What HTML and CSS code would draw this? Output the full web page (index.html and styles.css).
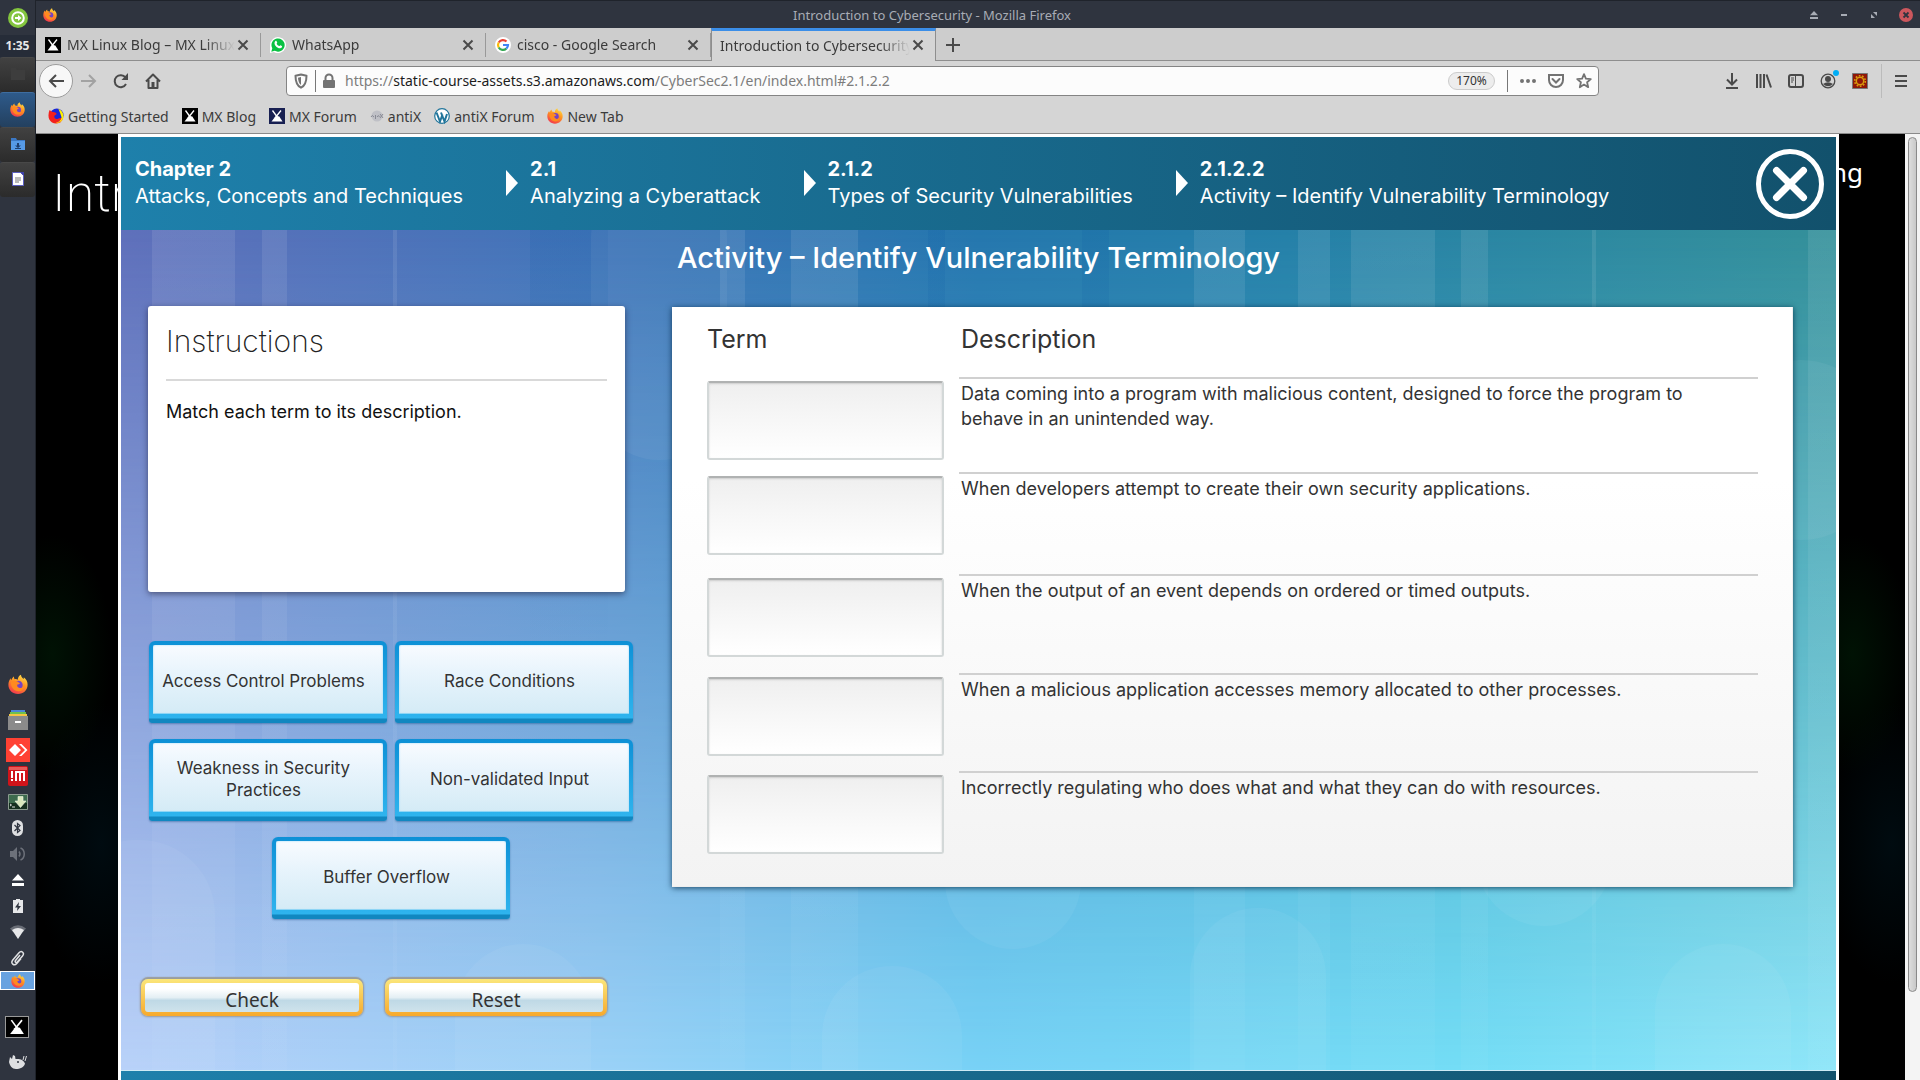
FILE: index.html
```html
<!DOCTYPE html>
<html lang="en">
<head>
<meta charset="utf-8">
<title>Introduction to Cybersecurity</title>
<link rel="stylesheet" href="styles.css">
</head>
<body>
<svg class="defs" aria-hidden="true">
  <defs>
    <linearGradient id="flame" x1="0.8" y1="0" x2="0.3" y2="1">
      <stop offset="0" stop-color="#ffe14a"/><stop offset="0.45" stop-color="#ff9421"/><stop offset="1" stop-color="#f2374f"/>
    </linearGradient>
    <symbol id="firefox" viewBox="0 0 20 20">
      <path fill="url(#flame)" d="M10 19.6C4.600 19.600.4 15.600.4 10.300c0-3 1.100-5.300 2.300-6.600 0 .9.200 1.500.5 2C3.800 4 5 2.500 6 2c-.2 1.200.2 2 .8 2.700 1.200-.3 2.200.1 3 .6C9.800 3 11 1.200 13 .3c0 2 1 2.700 2.600 4.200.3-.5.300-1.100.1-1.700 2.500 1.800 4 4.600 3.900 7.500 0 5.300-4.200 9.300-9.600 9.300z"/>
      <circle cx="10.400" cy="10.500" r="4.300" fill="#7543c4"/>
      <path fill="#ff8a1f" d="M2.800 7.500c2-1.600 4.400-1.800 6.700-.4 1 .6 1.300 1.300 2.500 1.300-.4 1.300-1.900 1.200-2.500 1.700-.8.700-.2 3.300 2.500 3.500 3 .1 4.800-2.400 4-5.100 1.600 4.500-1.400 8.300-5.400 8.300-4.500 0-8-4.300-7.800-9.300z"/>
    </symbol>
    <symbol id="firefox-old" viewBox="0 0 20 20">
      <circle cx="11" cy="9" r="8.500" fill="#1826d8"/>
      <path fill="#fff000" d="M13 1c3 1 6 4.500 6.300 8.500C19.700 15 16 18.500 12 19l5-7-2-6z"/>
      <path fill="#f3201c" d="M2 2.500l3.500 2.600c2.500-.4 4.500.5 5.500 2.400l-3 2.200c-.6 2.800 1.200 4.500 3.900 3.900 2.300-.5 3.500-1.600 4.600-.8.700.6-1.700 3.600-4.500 4.100l4 .7C11 21 4 19.500 1.500 14 0 10.500.5 6 2 2.500z"/>
      <path fill="#ff9a1c" d="M9 19c5 1 9-2 10-6.500-1.500 3-4.500 5-7.500 5z"/>
    </symbol>
    <symbol id="mx" viewBox="0 0 16 16">
      <path fill="#fff" d="M2.500 13.500L6 9l1.700-1 2.600.6L13.500 13.500z"/>
      <path fill="none" stroke="#fff" stroke-width="1.300" d="M3.500 2.500l6.500 9M12 2.500L6 10"/>
    </symbol>
    <symbol id="close" viewBox="0 0 16 16">
      <path fill="none" stroke="currentColor" stroke-width="2" d="M3.500 3.500l9 9M12.500 3.500l-9 9"/>
    </symbol>
    <symbol id="eject" viewBox="0 0 12 12">
      <path fill="currentColor" d="M6 0l6 6.500H0zM0 9h12v3H0z"/>
    </symbol>
  </defs>
</svg>

<div class="desktop">
  <aside class="panel">
    <button class="start" aria-label="Menu">
      <svg width="20" height="20" viewBox="0 0 20 20"><circle cx="10" cy="10" r="10" fill="#83c53e"/><circle cx="10" cy="10" r="5.800" fill="none" stroke="#fff" stroke-width="2"/><path d="M7 9h3V7l3.500 3-3.500 3v-2H7z" fill="#fff"/></svg>
    </button>
    <time class="clock">1:35</time>
    <button class="task" aria-label="Files"><svg width="14" height="14" viewBox="0 0 14 14"><path fill="#3d3d3d" d="M0 1h5l1 2h8v10H0z"/></svg></button>
    <button class="task task-active" aria-label="Firefox"><svg width="15" height="15"><use href="#firefox"/></svg></button>
    <button class="task" aria-label="Downloads"><svg width="14" height="14" viewBox="0 0 14 14"><path fill="#3b78c4" d="M0 1h5l1 2h8v3H0z"/><path fill="#569ae6" d="M0 4h14v9H0z"/><path fill="#1e3f6f" d="M6 6h2v2.500h2L7 11 4 8.500h2zM4 11h6v1H4z"/></svg></button>
    <button class="task" aria-label="Document"><svg width="12" height="14" viewBox="0 0 12 14"><path fill="#fff" stroke="#5b5fc0" d="M.5.5h8l3 3v10H.5z"/><path stroke="#777" d="M3 6h6M3 8h6M3 10h4"/><path fill="#3e42a8" d="M8 0h4v4z"/></svg></button>

    <div class="tray">
      <span class="tray-tall"><svg width="20" height="21"><use href="#firefox"/></svg></span>
      <span class="tray-tall"><svg width="20" height="20" viewBox="0 0 20 20"><path fill="#4a86d8" d="M3 0h14v3H3z"/><path fill="#6fc04c" d="M2 2h16v3H2z"/><path fill="#f4c542" d="M1 4h18v3H1z"/><rect y="6" width="20" height="14" fill="#8b8b8b"/><path fill="#fff" d="M7 11h6v2H7z"/></svg></span>
      <span class="tray-item"><svg width="24" height="24" viewBox="0 0 24 24"><path fill="#ff4133" d="M0 0h24v24H0z"/><path fill="#fff" d="M9 6l6 6-6 6-6-6zM13 6h2.500l6 6-6 6H13l6-6z"/></svg></span>
      <span class="tray-item"><svg width="20" height="20" viewBox="0 0 20 20"><rect width="20" height="20" rx="2" fill="#d0141a"/><path fill="#e85a58" d="M1 1h18v3H1z"/><path fill="#fff" d="M3 5h2v7H3zM3 13h2v2H3zM7 5h10v10h-2V7h-2v8h-2V7H9v8H7z"/></svg></span>
      <span class="tray-item"><svg width="20" height="16" viewBox="0 0 20 16"><path fill="#3d6b4d" stroke="#8a9a8e" d="M.5.500h19v15H.5z"/><path fill="#16301f" d="M1 9h18v6H1z"/><path fill="#d9e8bd" stroke="#f4f8e8" stroke-width=".6" d="M10 2.500h5V7h3l-5.500 6.500L7 7h3z"/><path stroke="#ddd" fill="none" d="M2 10l1.500 1L2 12M4 13h3"/></svg></span>
      <span class="tray-item"><svg width="11" height="16" viewBox="0 0 11 16"><rect width="11" height="16" rx="5.500" fill="#dedfe1"/><path fill="none" stroke="#2f343f" stroke-width="1.200" d="M2.500 5l5.500 5.500-2.500 2V3.500L8 5.500 2.500 11"/></svg></span>
      <span class="tray-item"><svg width="16" height="14" viewBox="0 0 16 14"><path fill="#6d717a" d="M0 4h3l4-4v14l-4-4H0z"/><path fill="none" stroke="#6d717a" stroke-width="1.500" d="M9 4.500q2 2.500 0 5M10.500 1c5 2 5 10 0 12"/></svg></span>
      <span class="tray-item tray-light"><svg width="12" height="12"><use href="#eject"/></svg></span>
      <span class="tray-item"><svg width="10" height="14" viewBox="0 0 10 14"><path fill="#e6e7e9" d="M0 1h3V0h4v1h3v13H0z"/><path fill="#2f343f" d="M6 3L2 8.500h2.500L4 12l4-5H5.500z"/></svg></span>
      <span class="tray-item"><svg width="16" height="14" viewBox="0 0 16 14"><path fill="#696d76" d="M0 3.500q8-6.500 16 0l-3 3.500H3z"/><path fill="#e6e7e9" d="M2 5q6-4 12 0L8 14z"/></svg></span>
      <span class="tray-item"><svg width="16" height="16" viewBox="0 0 16 16"><path fill="none" stroke="#e0e1e3" stroke-width="1.500" d="M10 5l-4.500 5.500c-1 1.300.6 2.700 1.800 1.500L12.500 6c2.500-3-1-6-3.500-3.200L2.800 10C.2 13.300 4 16.500 6.800 13.500L11 8.500"/></svg></span>
      <span class="tray-selected"><svg width="14" height="14"><use href="#firefox"/></svg></span>
      <span class="tray-mx"><svg width="20" height="20"><use href="#mx"/></svg></span>
      <span class="tray-item"><svg width="18" height="14" viewBox="0 0 18 14"><path fill="#dedfe1" d="M0 7l1-5 2 2 1-4 2 1 .5 3c4-.5 8 .5 9.500 4.500-1 4-5 5.500-9 5.500C3 14 1 11 0 7z"/><path fill="none" stroke="#dedfe1" d="M14 5l1-4M16 6l1.500-5"/><circle cx="9" cy="7" r="1" fill="#2f343f"/></svg></span>
    </div>
  </aside>

  <div class="window">
    <div class="titlebar">
      <svg width="14" height="14"><use href="#firefox"/></svg>
      <span class="titlebar-text">Introduction to Cybersecurity - Mozilla Firefox</span>
      <div class="controls">
        <button aria-label="Shade"><svg width="8" height="8"><use href="#eject"/></svg></button>
        <button aria-label="Minimize"><svg width="6" height="2"><path fill="currentColor" d="M0 0h6v2H0z"/></svg></button>
        <button aria-label="Restore"><svg width="6" height="6" viewBox="0 0 6 6"><path fill="currentColor" d="M2 0h4v4zM0 2v4h4z"/></svg></button>
        <button aria-label="Close"><svg width="14" height="14" viewBox="0 0 14 14"><circle cx="7" cy="7" r="7" fill="#cc575d"/><path stroke="#2f343f" stroke-width="1.800" d="M4.500 4.500l5 5M9.500 4.500l-5 5"/></svg></button>
      </div>
    </div>

    <div class="tabs">
      <div class="tab"><svg class="fav fav-mx" width="16" height="16"><use href="#mx"/></svg><span class="tab-text">MX Linux Blog – MX Linux</span><button class="tab-close" aria-label="Close tab"><svg width="16" height="16"><use href="#close"/></svg></button></div>
      <div class="tab"><svg class="fav" width="16" height="16" viewBox="0 0 16 16"><path fill="#fff" d="M0 16V8a8 8 0 1 1 4 7z"/><path fill="#0ac143" d="M1.300 14.700l1-3.400a6.600 6.600 0 1 1 2.500 2.500z"/><path fill="#fff" d="M5.200 4.200c1-.8 1.300-.3 2 1.300.2.600-.7 1-.5 1.400.6 1 1.300 1.700 2.400 2.200.5.200.9-1 1.300-.8 1.900.9 2 1 1.500 2-.9 1.400-2.700 1.200-4.500.1C5.300 9 3.500 6.500 5.200 4.200z"/></svg><span class="tab-text">WhatsApp</span><button class="tab-close" aria-label="Close tab"><svg width="16" height="16"><use href="#close"/></svg></button></div>
      <div class="tab"><svg class="fav" width="16" height="16" viewBox="0 0 16 16"><circle cx="8" cy="8" r="8" fill="#fff"/><g fill="none" stroke-width="2.200"><path stroke="#ea4335" d="M11.500 4.500A5 5 0 0 0 3.700 5.500"/><path stroke="#fbbc05" d="M3.700 5.500a5 5 0 0 0 0 5"/><path stroke="#34a853" d="M3.700 10.500a5 5 0 0 0 7.600 1.200"/><path stroke="#4285f4" d="M11.300 11.700A5 5 0 0 0 13 8H8"/></g></svg><span class="tab-text">cisco - Google Search</span><button class="tab-close" aria-label="Close tab"><svg width="16" height="16"><use href="#close"/></svg></button></div>
      <div class="tab tab-current"><span class="tab-text">Introduction to Cybersecurity</span><button class="tab-close" aria-label="Close tab"><svg width="16" height="16"><use href="#close"/></svg></button></div>
      <button class="tab-new" aria-label="New tab"><svg width="14" height="14" viewBox="0 0 14 14"><path stroke="currentColor" stroke-width="2" d="M7 0v14M0 7h14"/></svg></button>
    </div>

    <div class="nav">
      <div class="nav-buttons">
        <button class="back" aria-label="Back"><svg width="16" height="14" viewBox="0 0 16 14"><path fill="none" stroke="currentColor" stroke-width="2" d="M16 7H2M8 1L2 7l6 6"/></svg></button>
        <button class="faded" aria-label="Forward"><svg width="16" height="14" viewBox="0 0 16 14"><path fill="none" stroke="currentColor" stroke-width="2" d="M0 7h14M8 1l6 6-6 6"/></svg></button>
        <button aria-label="Reload"><svg width="16" height="16" viewBox="0 0 16 16"><path fill="none" stroke="currentColor" stroke-width="2" d="M13 11a6 6 0 1 1-.5-6.500"/><path fill="currentColor" d="M15 0v7H8.500z"/></svg></button>
        <button aria-label="Home"><svg width="16" height="16" viewBox="0 0 16 16"><path fill="none" stroke="currentColor" stroke-width="2" stroke-linejoin="round" d="M1 8.500L8 1.500l7 7M3.500 7v8h9V7"/><path fill="currentColor" d="M6.500 9h3v6h-3z"/></svg></button>
      </div>
      <div class="urlbar">
        <svg width="14" height="16" viewBox="0 0 14 16"><path fill="none" stroke="currentColor" stroke-width="2" stroke-linejoin="round" d="M7 1.500l5.500 1.200c0 6-1.500 10-5.500 12-4-2-5.500-6-5.500-12z"/><path fill="currentColor" d="M7 4v8C5 10.500 4.200 8 4 4.700z"/></svg>
        <span class="url-sep"></span>
        <svg width="12" height="16" viewBox="0 0 12 16"><rect y="7" width="12" height="8" rx="1" fill="currentColor"/><path fill="none" stroke="currentColor" stroke-width="2" d="M2.500 8V5a3.500 3.500 0 0 1 7 0v3"/></svg>
        <span class="url">https://<b>static-course-assets.s3.amazonaws.com</b>/CyberSec2.1/en/index.html#2.1.2.2</span>
        <button class="zoom">170%</button>
        <span class="url-sep"></span>
        <svg width="16" height="4" viewBox="0 0 16 4"><path stroke="currentColor" stroke-width="4" stroke-linecap="round" d="M2 2h0M8 2h0M14 2h0"/></svg>
        <svg width="16" height="14" viewBox="0 0 16 14"><path fill="none" stroke="currentColor" stroke-width="2" d="M1 1h14v5a7 7 0 0 1-14 0z"/><path fill="none" stroke="currentColor" stroke-width="2" stroke-linecap="round" d="M4.500 5L8 8.500 11.500 5"/></svg>
        <svg width="16" height="16" viewBox="0 0 16 16"><path fill="none" stroke="currentColor" stroke-width="1.800" stroke-linejoin="round" d="M8 1.200l1.900 4.500 4.900.4-3.700 3.200 1.100 4.900L8 11.600l-4.200 2.600 1.100-4.900L1.200 6.100l4.900-.4z"/></svg>
      </div>
      <div class="nav-tools">
        <button aria-label="Downloads"><svg width="16" height="16" viewBox="0 0 16 16"><path fill="none" stroke="currentColor" stroke-width="2" d="M8 0v11M3 6.500L8 11.500l5-5M2 15h12"/></svg></button>
        <button aria-label="Library"><svg width="16" height="14" viewBox="0 0 16 14"><path fill="none" stroke="currentColor" stroke-width="2" d="M1 0v14M4.500 0v14M8 0v14M10.500.5L15 13.500"/></svg></button>
        <button aria-label="Sidebars"><svg width="16" height="14" viewBox="0 0 16 14"><rect x="1" y="1" width="14" height="12" rx="2" fill="none" stroke="currentColor" stroke-width="2"/><path stroke="currentColor" d="M7.500 1v12M3 4h3M3 6h3M3 8h2"/></svg></button>
        <button class="account" aria-label="Account"><svg width="16" height="16" viewBox="0 0 16 16"><circle cx="8" cy="8" r="6.800" fill="none" stroke="currentColor" stroke-width="1.300"/><circle cx="8" cy="6" r="3" fill="currentColor"/><path fill="currentColor" d="M3 11q5-3.500 10 0-5 4.500-10 0z"/></svg></button>
        <button aria-label="Extension"><svg width="16" height="16" viewBox="0 0 16 16"><path fill="#8f1608" stroke="#777" d="M.5.5h15v15H.5z"/><circle cx="8" cy="8" r="5.300" fill="none" stroke="#d99a0c" stroke-width="1.600" stroke-dasharray="1.700 1.600"/><circle cx="8" cy="8" r="3.700" fill="none" stroke="#d99a0c" stroke-width="1.500"/></svg></button>
        <span class="tool-sep"></span>
        <button aria-label="Open menu"><svg width="12" height="12" viewBox="0 0 12 12"><path stroke="currentColor" stroke-width="2" d="M0 1h12M0 6h12M0 11h12"/></svg></button>
      </div>
    </div>

    <nav class="bookmarks">
      <a href="#"><svg width="16" height="16"><use href="#firefox-old"/></svg>Getting Started</a>
      <a href="#"><svg class="fav-mx" width="16" height="16"><use href="#mx"/></svg>MX Blog</a>
      <a href="#"><svg class="fav-mx fav-forum" width="16" height="16"><use href="#mx"/></svg>MX Forum</a>
      <a href="#"><svg width="14" height="16" viewBox="0 0 14 16"><circle cx="7" cy="8" r="5.500" fill="#bfc0c6"/><path fill="none" stroke="#888a94" d="M1 9q1-3 3 0M5.500 7v4M7 9q1.500-3 2.500 0M13 6l-3 4M10 6l3 4"/></svg>antiX</a>
      <a href="#"><svg width="16" height="16" viewBox="0 0 16 16"><circle cx="8" cy="8" r="7.300" fill="#fff" stroke="#21759b" stroke-width="1.200"/><path fill="none" stroke="#21759b" stroke-width="2" d="M2.500 4.500L6 13.500l2.500-7M7 4.500l3.500 9L13 6"/></svg>antiX Forum</a>
      <a href="#"><svg width="16" height="16"><use href="#firefox"/></svg>New Tab</a>
    </nav>

    <div class="page">
      <div class="backdrop backdrop-left"><span class="site-title">Intr</span></div>
      <main class="lesson">
        <header class="lesson-header">
          <nav class="crumbs">
            <a href="#"><strong>Chapter 2</strong>Attacks, Concepts and Techniques</a>
            <a href="#"><strong>2.1</strong>Analyzing a Cyberattack</a>
            <a href="#"><strong>2.1.2</strong>Types of Security Vulnerabilities</a>
            <a href="#"><strong>2.1.2.2</strong>Activity – Identify Vulnerability Terminology</a>
          </nav>
          <button class="lesson-close" aria-label="Close"><svg width="68" height="70" viewBox="0 0 68 70"><ellipse cx="34" cy="35" rx="31.500" ry="32.500" fill="none" stroke="#fff" stroke-width="5"/><path stroke="#fff" stroke-width="7" stroke-linecap="round" d="M20.500 21.500l27 27M47.500 21.500l-27 27"/></svg></button>
        </header>

        <section class="activity">
          <svg class="scenery" viewBox="0 0 1715 840" preserveAspectRatio="none" aria-hidden="true">
            <defs>
              <linearGradient id="fade-light" x1="0" y1="0" x2="0" y2="840" gradientUnits="userSpaceOnUse">
                <stop offset="0" stop-color="#fff" stop-opacity=".09"/><stop offset="1" stop-color="#fff" stop-opacity=".03"/>
              </linearGradient>
              <linearGradient id="fade-dark" x1="0" y1="0" x2="0" y2="840" gradientUnits="userSpaceOnUse">
                <stop offset="0" stop-color="#0050a0" stop-opacity=".12"/><stop offset=".5" stop-color="#0050a0" stop-opacity="0"/>
              </linearGradient>
            </defs>
            <path fill="url(#fade-light)" d="M31 0h83v840h-83zM141 0h25v840h-25zM272 0h4v840h-4zM599 0h25v840h-25zM670 0h67v840h-67zM1073 0h51v840h-51zM1177 0h32v840h-32zM1230 0h84v840h-84zM1340 0h27v840h-27zM1471 0h4v840h-4zM1687 0h28v840h-28z"/>
            <path fill="url(#fade-dark)" d="M409 0h78v840h-78zM807 0h17v840h-17zM961 0h27v840h-27z"/>
            <g fill="#fff" fill-opacity=".05">
              <rect x="-60" y="610" width="154" height="300" rx="75"/>
              <rect x="334" y="714" width="136" height="300" rx="68"/>
              <rect x="470" y="-60" width="136" height="290" rx="68"/>
              <rect x="701" y="736" width="140" height="300" rx="70"/>
              <rect x="824" y="400" width="136" height="319" rx="68"/>
              <rect x="1069" y="678" width="136" height="300" rx="68"/>
              <rect x="1355" y="500" width="136" height="196" rx="68"/>
              <rect x="1534" y="714" width="136" height="300" rx="68"/>
              <rect x="1600" y="130" width="160" height="180" rx="80"/>
            </g>
          </svg>

          <h1>Activity – Identify Vulnerability Terminology</h1>

          <div class="work">
            <div class="left">
              <article class="instructions">
                <h2>Instructions</h2>
                <p>Match each term to its description.</p>
              </article>
              <div class="tiles">
                <button class="tile">Access Control Problems</button>
                <button class="tile">Race Conditions</button>
                <button class="tile">Weakness in Security Practices</button>
                <button class="tile">Non-validated Input</button>
                <button class="tile">Buffer Overflow</button>
              </div>
              <div class="actions">
                <button class="action">Check</button>
                <button class="action">Reset</button>
              </div>
            </div>

            <div class="board">
              <table class="matches">
                <thead><tr><th class="col-term">Term</th><th>Description</th></tr></thead>
                <tbody>
                  <tr><td><div class="slot"></div></td><td class="desc">Data coming into a program with malicious content, designed to force the program to behave in an unintended way.</td></tr>
                  <tr><td><div class="slot"></div></td><td class="desc">When developers attempt to create their own security applications.</td></tr>
                  <tr><td><div class="slot"></div></td><td class="desc">When the output of an event depends on ordered or timed outputs.</td></tr>
                  <tr><td><div class="slot"></div></td><td class="desc">When a malicious application accesses memory allocated to other processes.</td></tr>
                  <tr><td><div class="slot"></div></td><td class="desc">Incorrectly regulating who does what and what they can do with resources.</td></tr>
                </tbody>
              </table>
            </div>
          </div>
        </section>
        <footer class="lesson-footer"></footer>
      </main>
      <div class="backdrop backdrop-right"><span class="academy">ng</span></div>
      <div class="scrollbar"><span class="thumb"></span></div>
    </div>
  </div>
</div>
</body>
</html>
```
FILE: styles.css
```css
* { box-sizing: border-box; }

body {
  margin: 0;
  font-family: "Noto Sans", "Open Sans", sans-serif;
  font-size: 14px;
  color: #3b3b3b;
}

button {
  margin: 0;
  padding: 0;
  border: 0;
  background: none;
  color: inherit;
  font: inherit;
}

a { color: inherit; text-decoration: none; }
svg { display: block; flex: none; }
.defs { position: absolute; width: 0; height: 0; }

.desktop {
  display: flex;
  height: 100vh;
  overflow: hidden;
}

/* Desktop panel */
.panel {
  display: flex;
  flex-direction: column;
  flex: none;
  width: 36px;
  background: #2f343f;
  border-right: 1px solid #1f232b;
}
.start, .task {
  display: flex;
  align-items: center;
  justify-content: center;
  flex: none;
  height: 35px;
}
.clock {
  height: 22px;
  background: #262c38;
  color: #e8e8e8;
  font-size: 12px;
  font-weight: 700;
  line-height: 22px;
  text-align: center;
}
.task {
  padding-bottom: 2px;
  border-radius: 3px;
  border-top: 1px solid #484848;
  background: linear-gradient(#414141, #2b2b2b);
}
.task-active {
  border-top-color: #3e6da0;
  background: linear-gradient(#2e5a8a, #23405f);
}
.tray {
  display: flex;
  flex-direction: column;
  flex: 1;
  justify-content: flex-end;
  padding-bottom: 5px;
}
.tray span {
  display: flex;
  align-items: center;
  justify-content: center;
  flex: none;
  height: 26px;
}
.tray .tray-tall { height: 35px; }
.tray-light { color: #fff; }
.tray .tray-selected {
  height: 19px;
  border: 1px solid #fff;
  background: #68a2e0;
}
.tray .tray-mx {
  width: 24px;
  height: 22px;
  margin: 26px 5px 11px;
  border: 1px solid #999;
  background: #000;
}

/* Browser window */
.window {
  display: flex;
  flex-direction: column;
  flex: 1;
  min-width: 0;
  background: #d5d5d5;
}
.titlebar {
  display: flex;
  align-items: center;
  flex: none;
  height: 28px;
  padding: 0 7px;
  border-top: 1px solid #1f232b;
  background: #2f343f;
  color: #a8acb5;
  font-size: 13px;
}
.titlebar-text { flex: 1; padding-left: 8px; text-align: center; }
.controls { display: flex; align-items: center; }
.controls button {
  display: flex;
  justify-content: center;
  width: 30px;
}
.controls button:last-child { width: 14px; margin-left: 10px; }

.tabs {
  display: flex;
  flex: none;
  height: 33px;
  background: linear-gradient(#8e8e8e, #8e8e8e) bottom / 100% 1px no-repeat #cdcdcd;
}
.tab {
  display: flex;
  align-items: center;
  width: 225px;
  padding: 0 10px 0 9px;
  background: linear-gradient(#999, #999) right 5px / 1px 24px no-repeat;
}
.tab-current {
  padding: 0 9px 2px 8px;
  border: 1px solid #8e8e8e;
  border-top: 3px solid #3b8ee8;
  border-bottom: 0;
  background: #d5d5d5;
}
.fav { margin-right: 6px; }
.fav-mx { background: #000; }
.fav-forum { background: #182052; }
.tab-text {
  flex: 1;
  overflow: hidden;
  white-space: nowrap;
  mask-image: linear-gradient(90deg, #000 calc(100% - 30px), transparent);
}
.tab-close { color: #4a4a4a; }
.tab-new { width: 33px; display: flex; align-items: center; justify-content: center; color: #4a4a4a; }

.nav {
  display: flex;
  align-items: center;
  flex: none;
  height: 39px;
  padding: 0 13px 0 3px;
  color: #4a4a4a;
}
.nav-buttons { display: flex; align-items: center; gap: 16px; width: 247px; }
.back {
  display: flex;
  align-items: center;
  justify-content: center;
  width: 34px;
  height: 34px;
  margin-right: -8px;
  border: 1px solid #9c9c9c;
  border-radius: 50%;
  background: #f7f7f7;
}
.faded { color: #a2a2a2; }
.urlbar {
  display: flex;
  align-items: center;
  flex: 1;
  height: 30px;
  gap: 12px;
  padding: 0 6px 0 7px;
  border: 1px solid #848484;
  border-radius: 4px;
  background: #fcfcfc;
  color: #737373;
}
.url-sep { width: 1px; height: 22px; margin: 0 -5px; background: #777; }
.url { flex: 1; margin-left: -2px; white-space: nowrap; color: #7c7c7c; }
.url b { font-weight: 400; color: #1c1c1c; }
.zoom {
  width: 47px;
  height: 18px;
  margin-right: 5px;
  border: 1px solid #ccc;
  border-radius: 9px;
  background: #ededed;
  color: #333;
  font-size: 12px;
  line-height: 16px;
}
.zoom + .url-sep { margin-right: 0; }
.nav-tools { display: flex; align-items: center; gap: 16px; margin-left: 125px; }
.account { position: relative; }
.account::after {
  content: "";
  position: absolute;
  top: -3px;
  right: -3px;
  width: 6px;
  height: 6px;
  border-radius: 50%;
  background: #00adf5;
}
.tool-sep { width: 1px; height: 34px; margin: 0 -3px; background: #bbb; }

.bookmarks {
  display: flex;
  align-items: center;
  flex: none;
  gap: 13px;
  height: 34px;
  padding: 0 12px 1px;
  border-bottom: 1px solid #8a8a8a;
}
.bookmarks a { display: flex; align-items: center; gap: 4px; }

/* Page */
.page {
  display: flex;
  flex: 1;
  min-height: 0;
  background: #000;
}
.backdrop {
  flex: none;
  overflow: hidden;
  color: #fff;
  white-space: nowrap;
  background:
    radial-gradient(60px 120px at 20% 55%, #001204, transparent),
    radial-gradient(70px 140px at 80% 75%, #000b10, transparent),
    #000;
}
.backdrop-left { width: 82px; padding: 20px 0 0 16px; }
.backdrop-right { width: 66px; padding-top: 20px; }
.site-title {
  font-family: Roboto, "Open Sans", sans-serif;
  font-size: 52px;
  font-weight: 200;
  line-height: 80px;
}
.academy {
  display: block;
  width: 24px;
  direction: rtl;
  font-size: 26px;
  line-height: 36px;
}
.scrollbar { flex: none; width: 15px; padding: 3px; background: #f4f4f4; }
.thumb {
  display: block;
  height: 91%;
  border: 1px solid #8a8a8a;
  border-radius: 5px;
  background: linear-gradient(90deg, #dedede, #c8c8c8);
}

/* Lesson */
.lesson {
  display: flex;
  flex-direction: column;
  flex: 1;
  min-width: 0;
  border: 3px solid #fff;
  border-bottom: 0;
  font-family: Inter, "Liberation Sans", sans-serif;
}
.lesson-header, .lesson-footer { background: linear-gradient(90deg, #1e80ab, #12516c); }
.lesson-header {
  display: flex;
  justify-content: space-between;
  flex: none;
  height: 93px;
  padding: 12px 12px 0 14px;
  color: #fff;
}
.crumbs { display: flex; gap: 67px; padding-top: 7px; font-size: 20px; line-height: 27px; white-space: nowrap; }
.crumbs a { position: relative; }
.crumbs a + a::before {
  content: "";
  position: absolute;
  top: 14px;
  left: -24px;
  border: solid transparent;
  border-width: 13px 0 13px 12px;
  border-left-color: #fff;
}
.crumbs strong { display: block; }
.lesson-close { align-self: flex-start; }
.lesson-footer { flex: none; height: 10px; border-top: 1px solid #cdeaf5; }

.activity {
  position: relative;
  flex: 1;
  min-height: 0;
  background: linear-gradient(90deg, #5f70bb, #3f74b8 28%, #2577ae 50%, #2580a8 68%, #34909a);
}
.activity::before {
  content: "";
  position: absolute;
  inset: 0;
  background: linear-gradient(90deg, #b6d0f9, #9bd2f7 28%, #78d2f6 50%, #74ddf6 78%, #90e6f9);
  mask-image: linear-gradient(transparent, #000);
}
.scenery { position: absolute; inset: 0; width: 100%; height: 100%; }
.activity h1, .work { position: relative; }
.activity h1 {
  margin: 0;
  padding: 8px 0 28px;
  color: #fff;
  font-size: 29px;
  font-weight: 500;
  line-height: 40px;
  text-align: center;
}
.work { display: flex; padding-right: 43px; }
.left { flex: none; width: 551px; padding-left: 20px; }
.instructions {
  width: 477px;
  height: 286px;
  margin-left: 7px;
  padding: 0 18px;
  border-radius: 3px;
  background: #fff;
  box-shadow: 0 2px 6px rgba(30, 30, 60, .6);
  color: #111;
}
.instructions h2 {
  margin: 0;
  padding: 15px 0 18px;
  border-bottom: 2px solid #d9d9d9;
  color: #222;
  font-size: 30px;
  font-weight: 200;
  line-height: 40px;
}
.instructions p { margin: 18px 0 0; font-size: 18px; line-height: 25px; }
.tiles {
  display: flex;
  flex-wrap: wrap;
  justify-content: center;
  gap: 16px 8px;
  width: 484px;
  margin: 49px 0 0 8px;
}
.tile {
  width: 238px;
  height: 82px;
  padding: 2px 15px 0 6px;
  border: 4px solid transparent;
  border-bottom-width: 9px;
  border-radius: 6px 6px 3px 3px;
  background:
    linear-gradient(#f8fbff, #e8f4fc 40%, #d4ebf6) padding-box,
    linear-gradient(#0d90d6, #2fb4ee 94%, #1187c0 95%) border-box;
  box-shadow: inset 0 0 2px #8fd6f5, inset 0 -1px 0 #8fd6f5, 0 1px 2px rgba(0, 60, 120, .4);
  color: #333;
  font-size: 17px;
  line-height: 22px;
}
.actions { display: flex; gap: 22px; margin-top: 60px; }
.action {
  width: 222px;
  height: 37px;
  padding-top: 5px;
  border: 4px solid transparent;
  border-radius: 7px;
  background:
    linear-gradient(#fff 20%, #e4eff4 50%, #bfd9e6 60%, #cfe3ec) padding-box,
    linear-gradient(#fbe67a, #f7a92c) border-box;
  box-shadow: 0 -2px 1px #999d9f, 0 0 2px 1px #999;
  color: #333;
  font-family: "Noto Sans", sans-serif;
  font-size: 19px;
  line-height: 24px;
}

.board {
  flex: 1;
  align-self: flex-start;
  margin-top: 1px;
  padding: 0 34px 32px 35px;
  border: 1px solid #eee;
  border-width: 0 1px 1px 0;
  background: linear-gradient(#fff 30%, #f3f3f3);
  box-shadow: 0 1px 6px rgba(0, 40, 70, .8);
}
.matches { width: 100%; border-collapse: separate; border-spacing: 0; table-layout: fixed; color: #333; }
.matches th {
  height: 70px;
  padding: 10px 2px 0;
  font-size: 25px;
  font-weight: 400;
  line-height: 44px;
  text-align: left;
  vertical-align: top;
}
.matches .col-term { width: 252px; padding-left: 0; }
.matches td { height: 98px; padding: 4px 0 0; vertical-align: top; }
.matches tr:first-child td { height: 95px; }
.matches tr:nth-child(2) td { height: 102px; }
.matches tr:nth-child(3) td { height: 99px; }
.matches tbody tr:last-child td { height: 82px; }
.matches .desc {
  padding: 2px 32px 0 2px;
  border-top: 2px solid #d0d0d0;
  font-size: 18px;
  line-height: 25px;
}
.slot {
  width: 237px;
  height: 79px;
  border: 2px solid #d3d8d8;
  border-top-color: #b0b2b2;
  border-radius: 3px;
  background: linear-gradient(#efefef, #fff);
  box-shadow: inset 0 1px 2px #ccc;
}
```
